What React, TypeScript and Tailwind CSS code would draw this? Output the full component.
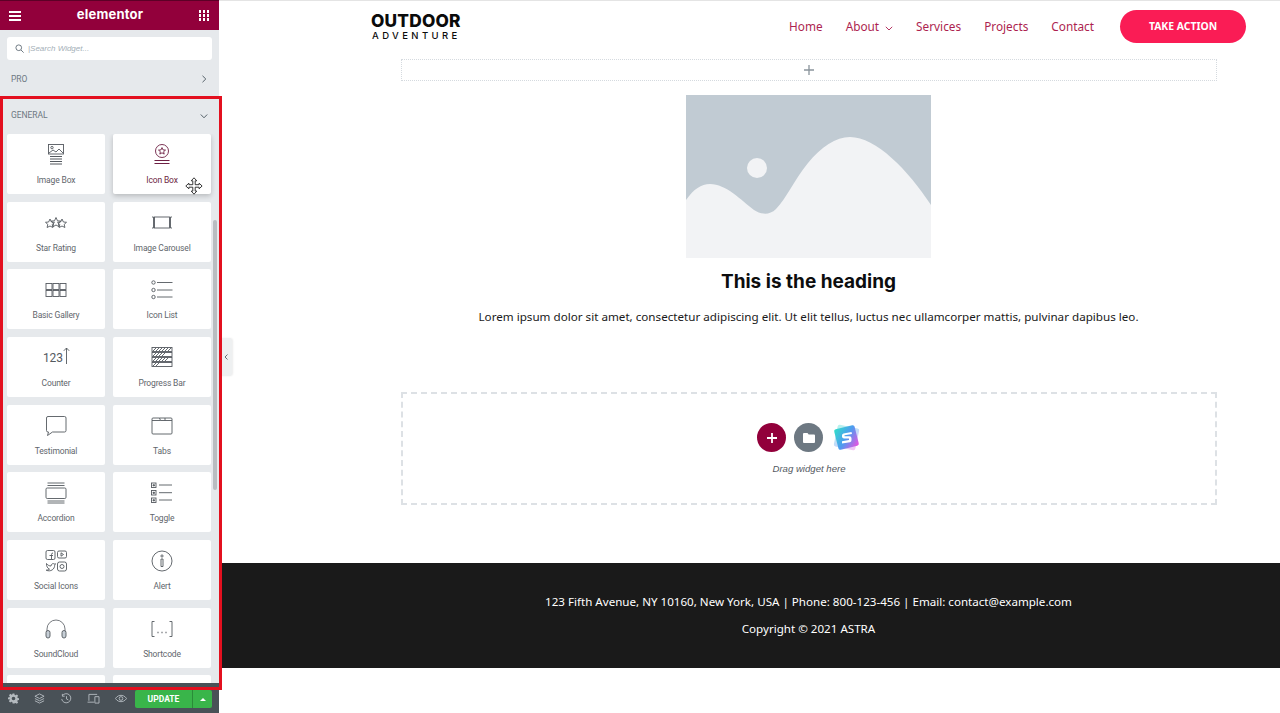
import type { ReactNode } from 'react';

const ink = '#54595f';

function Ico({ children, c = ink }: { children: ReactNode; c?: string }) {
  return (
    <svg width="24" height="24" viewBox="0 0 24 24" fill="none" stroke={c} strokeWidth="0.9" className="block">
      {children}
    </svg>
  );
}

const WIDGETS: { name: string; icon: ReactNode; active?: boolean }[] = [
  { name: 'Image Box', icon: <Ico><rect x="4.500" y="1.500" width="15" height="9.500" /><circle cx="8" cy="4.600" r="1.200" /><path d="M5 10l4-3 3 2 3-3 4 4" /><path d="M6 13.500h12M6 16h12M6 18.500h12M6 21h12" strokeWidth="1.100" /></Ico> },
  { name: 'Icon Box', active: true, icon: <Ico c="#6d1f43"><circle cx="12" cy="8" r="6.500" /><path d="M12 4.600l1 2.300 2.500.2-1.900 1.600.6 2.400-2.200-1.300-2.200 1.300.6-2.400-1.900-1.600 2.500-.2z" /><path d="M4.500 17.500h15M4.500 20.500h15" strokeWidth="1.100" /></Ico> },
  { name: 'Star Rating', icon: <Ico><path d="M6 8l1.400 3 3.100.3-2.300 2.100.7 3.100L6 15l-2.900 1.500.7-3.100L1.500 11.300l3.100-.3z" /><path d="M12 6.500l1.500 3.300 3.300.3-2.500 2.300.7 3.300L12 14l-3 1.700.7-3.300-2.500-2.300 3.300-.3z" /><path d="M18 8l1.400 3 3.100.3-2.300 2.100.7 3.100L18 15l-2.900 1.500.7-3.100-2.300-2.100 3.100-.3z" /></Ico> },
  { name: 'Image Carousel', icon: <Ico><rect x="4.500" y="6" width="15" height="11" /><path d="M2 6h1.500v11H2M22 6h-1.500v11H22" /></Ico> },
  { name: 'Basic Gallery', icon: <Ico><rect x="2" y="5.500" width="6" height="6" /><rect x="9" y="5.500" width="6" height="6" /><rect x="16" y="5.500" width="6" height="6" /><rect x="2" y="12.500" width="6" height="6" /><rect x="9" y="12.500" width="6" height="6" /><rect x="16" y="12.500" width="6" height="6" /></Ico> },
  { name: 'Icon List', icon: <Ico><circle cx="3.500" cy="4.500" r="1.700" /><circle cx="3.500" cy="12" r="1.700" /><circle cx="3.500" cy="19" r="1.700" /><path d="M7 4.500h15.500M7 12h15.500M7 19h15.500" /></Ico> },
  { name: 'Counter', icon: <span className="flex items-center text-[12px] leading-none text-[#54595f] font-['Roboto',sans-serif] ml-[1px]">123<svg width="7" height="18" viewBox="0 0 7 18" fill="none" stroke={ink} strokeWidth="0.9" className="mb-[3px]"><path d="M3.500 17V1M.8 3.800L3.500 1l2.700 2.800" /></svg></span> },
  { name: 'Progress Bar', icon: <Ico><g stroke="#54595f"><rect x="2" y="1.500" width="20" height="4" /><rect x="2" y="6.500" width="20" height="4" /><rect x="2" y="11.500" width="20" height="4" /><rect x="2" y="16.500" width="20" height="4" /></g><path d="M3 5l3-3M6 5l3-3M9 5l3-3M12 5l3-3M15 5l3-3M18 5l3-3M3 10l3-3M6 10l3-3M9 10l3-3M12 10l3-3M3 15l3-3M6 15l3-3M9 15l3-3M12 15l3-3M15 15l3-3M3 20l3-3M6 20l3-3" /></Ico> },
  { name: 'Testimonial', icon: <Ico><path d="M4 2.500h16.500a1.500 1.500 0 0 1 1.500 1.500v12.500a1.500 1.500 0 0 1-1.500 1.500H8.500L3.500 21.500l1-3.500H4a1.500 1.500 0 0 1-1.500-1.500V4A1.500 1.500 0 0 1 4 2.500z" /></Ico> },
  { name: 'Tabs', icon: <Ico><path d="M2 6.500V19a1 1 0 0 0 1 1h18a1 1 0 0 0 1-1V5a1 1 0 0 0-1-1H9.500l1 2.500H2z" /><path d="M2 6.500V5a1 1 0 0 1 1-1h6.500M15 4v2.500M10.500 6.500H22" /></Ico> },
  { name: 'Accordion', icon: <Ico><path d="M3.500 2h17M3.500 4.500h17M3.500 20h17M3.500 22h17" /><rect x="2" y="7" width="20" height="10.500" rx="1.200" /></Ico> },
  { name: 'Toggle', icon: <Ico><rect x="1.500" y="2" width="4.500" height="4.500" /><rect x="1.500" y="9.500" width="4.500" height="4.500" /><rect x="1.500" y="17" width="4.500" height="4.500" /><path d="M3 3.800h1.500v1H3zM3 11.300h1.500v1H3zM3 18.800h1.500v1H3z" fill={ink} /><path d="M9 4h13M9 11.700h13M9 19h13" /></Ico> },
  { name: 'Social Icons', icon: <Ico><rect x="2" y="1.500" width="9" height="9" rx="1.500" /><path d="M7.500 10V5.500a1.500 1.500 0 0 1 1.500-1.500M5.500 6.500h3.500" /><rect x="13.500" y="2" width="9" height="7" rx="1.500" /><path d="M17 3.800l2.500 1.700L17 7.200z" /><path d="M2.500 14.500c1.500 2 3 2.500 4.500 2.500 0-2 2-3 3.500-2l1-.3-.8 1.500c0 4-4 7-8.500 5 1.500 0 2.500-.3 3.300-1-2-1-3.200-3-3-5.700z" /><rect x="13.500" y="13" width="9" height="9" rx="2" /><circle cx="18" cy="17.500" r="2" /></Ico> },
  { name: 'Alert', icon: <Ico><circle cx="12" cy="12" r="10" /><path d="M11 10h2v7.500h-2z" /><circle cx="12" cy="7" r="1.100" /></Ico> },
  { name: 'SoundCloud', icon: <Ico><path d="M3 15v-3a9 9 0 0 1 18 0v3" strokeWidth="0.8" /><rect x="2" y="13.500" width="4" height="7.500" rx="2" fill="#c6ced6" /><rect x="18" y="13.500" width="4" height="7.500" rx="2" fill="#c6ced6" /></Ico> },
  { name: 'Shortcode', icon: <Ico><path d="M4.500 4.500H2v15h2.500M19.500 4.500H22v15h-2.500" /><path d="M7.500 15.500h1M11.500 15.500h1M15.500 15.500h1" strokeWidth="1.600" /></Ico> },
  { name: '', icon: null },
  { name: '', icon: null },
];

function Gear() {
  return (
    <svg width="11" height="11" viewBox="0 0 24 24" fill="#b4babf">
      <path fillRule="evenodd" d="M10 1h4l.6 3.200 2 .8 2.700-1.800 2.800 2.800-1.800 2.700.8 2 3.200.6v4l-3.200.6-.8 2 1.800 2.700-2.800 2.800-2.700-1.800-2 .8L14 23h-4l-.6-3.200-2-.8-2.700 1.800-2.800-2.800 1.800-2.700-.8-2L0 14v-4l3.200-.6.800-2-1.800-2.700L5 1.900l2.700 1.800 2-.8zM12 8a4 4 0 1 0 0 8 4 4 0 0 0 0-8z" />
    </svg>
  );
}

function BottomBar() {
  const s = { fill: 'none', stroke: '#b4babf', strokeWidth: 2 };
  return (
    <div className="h-[30px] shrink-0 bg-[#495157] flex items-center relative z-0">
      <div className="w-[135px] flex justify-between items-center px-[8px]">
        <Gear />
        <svg width="11" height="11" viewBox="0 0 24 24" {...s}><path d="M12 2l10 5-10 5L2 7zM2 12l10 5 10-5M2 17l10 5 10-5" /></svg>
        <svg width="11" height="11" viewBox="0 0 24 24" {...s}><path d="M3 6a10 10 0 1 1-1.500 7M3 2v5h5M12 7v6l4 2" /></svg>
        <svg width="13" height="11" viewBox="0 0 28 24" {...s}><path d="M4 17V3h18M1 20h14M17 8h9v14h-9z" /></svg>
        <svg width="12" height="11" viewBox="0 0 26 24" {...s}><path d="M1 12s4-7 12-7 12 7 12 7-4 7-12 7-12-7-12-7z" /><circle cx="13" cy="12" r="4" /></svg>
      </div>
      <div className="flex h-[18px] w-[77px] mt-[2px] rounded-[2px] overflow-hidden bg-[#39b54a] text-white">
        <div className="w-[58px] flex items-center justify-center text-[8.500px] font-bold font-['Roboto',sans-serif] border-r border-[#2a8c38]">UPDATE</div>
        <div className="flex-1 flex items-center justify-center">
          <div className="w-0 h-0 border-l-[3px] border-r-[3px] border-b-[3px] border-l-transparent border-r-transparent border-b-white" />
        </div>
      </div>
    </div>
  );
}

function Sidebar() {
  return (
    <aside className="w-[219px] h-[713px] shrink-0 bg-[#e6e9ec] flex flex-col overflow-hidden font-['Roboto',sans-serif]">
      <div className="h-[30px] shrink-0 bg-[#92003b] border-t border-[#5c0026] flex items-center justify-between pl-[9px] pr-[10px] text-white">
        <div className="flex flex-col gap-[2px] w-[12px]">
          <span className="h-[2px] bg-white" /><span className="h-[2px] bg-white" /><span className="h-[2px] bg-white" />
        </div>
        <span className="text-[13px] font-bold tracking-[0.2px] font-['Inter',sans-serif] mb-[1px]">elementor</span>
        <div className="grid grid-cols-3 gap-[1.500px] w-[10px]">
          {Array.from({ length: 9 }).map((_, i) => <span key={i} className="w-[2.500px] h-[2.500px] bg-white" />)}
        </div>
      </div>
      <div className="px-[7px] pt-[7px]">
        <div className="h-[23px] bg-white rounded-[3px] flex items-center pl-[8px] gap-[4px]">
          <svg width="9" height="9" viewBox="0 0 12 12" fill="none" stroke="#6d7882" strokeWidth="1.300"><circle cx="5" cy="5" r="3.800" /><path d="M8 8l3.500 3.500" /></svg>
          <span className="text-[8px] italic text-[#a4afb7] font-['Liberation_Sans',sans-serif]">|Search Widget...</span>
        </div>
      </div>
      <div className="h-[36px] shrink-0 flex items-center justify-between pl-[11px] pr-[12px] pt-[2px] text-[8.500px] tracking-[-0.05px] text-[#6d7882]">
        <span>PRO</span>
        <svg width="6" height="8" viewBox="0 0 6 8" fill="none" stroke="#556068" strokeWidth="1"><path d="M1.500 .8L4.800 4 1.500 7.200" /></svg>
      </div>
      <div className="h-[38px] shrink-0 flex items-center justify-between px-[11px] pt-[1px] text-[8.500px] tracking-[-0.05px] text-[#6d7882]">
        <span>GENERAL</span>
        <svg width="8" height="6" viewBox="0 0 8 6" fill="none" stroke="#556068" strokeWidth="1"><path d="M.8 1.500L4 4.800l3.200-3.300" /></svg>
      </div>
      <div className="relative flex-1 min-h-0 overflow-hidden">
        <div className="grid grid-cols-[98px_98px] gap-x-[8px] gap-y-[7.670px] pl-[7px]">
          {WIDGETS.map((w, i) => (
            <div key={i} className={`h-[60px] bg-white rounded-[2px] flex flex-col items-center pt-[9px] ${w.active ? 'shadow-[0_2px_5px_rgba(0,0,0,0.2)]' : ''}`}>
              <div className="h-[24px] flex items-center justify-center">{w.icon}</div>
              {w.name && <span className={`mt-[7px] text-[8.500px] tracking-[-0.15px] leading-[12px] ${w.active ? 'text-[#6d1f43]' : 'text-[#5f666c]'}`}>{w.name}</span>}
            </div>
          ))}
        </div>
        <div className="absolute right-[2px] top-[86px] w-[4px] h-[270px] bg-[#b9bdc1] rounded-[2px]" />
      </div>
      <BottomBar />
    </aside>
  );
}

function Header() {
  const items = ['Home', 'About', 'Services', 'Projects', 'Contact'];
  return (
    <header className="h-[58px] flex items-start justify-between">
      <div className="flex flex-col items-start text-[#0b0b0b] font-['Inter',sans-serif] mt-[12px]">
        <span className="text-[17.300px] leading-[16px] font-extrabold tracking-[0.2px]">OUTDOOR</span>
        <span className="text-[9.500px] leading-[13px] font-medium tracking-[3.400px] ml-[1px]">ADVENTURE</span>
      </div>
      <nav className="flex items-center gap-[23px] mt-[9px] text-[11.800px] text-[#ad1f50] font-['Noto_Sans',sans-serif]">
        {items.map(t => (
          <span key={t} className="flex items-center gap-[6px]">
            {t}
            {t === 'About' && <svg width="8" height="5" viewBox="0 0 8 5" fill="none" stroke="#ad1f50" strokeWidth="0.9" className="mt-[3px]"><path d="M.8.8L4 4l3.200-3.200" /></svg>}
          </span>
        ))}
        <span className="ml-[3px] w-[126px] h-[33px] rounded-full bg-[#fa1c55] text-white text-[10.400px] font-bold flex items-center justify-center">TAKE ACTION</span>
      </nav>
    </header>
  );
}

function Placeholder() {
  return (
    <svg width="245" height="163" viewBox="0 0 245 163" className="block">
      <rect width="245" height="163" fill="#c1cbd3" />
      <circle cx="71" cy="73" r="10" fill="#f2f3f5" />
      <path d="M0 105C8 94 15 89 24 89C40 89 55 105 68 115C74 119 83 121 90 114C100 104 108 85 122 68C135 52 150 42 164 42C190 42 222 75 245 110V163H0Z" fill="#f2f3f5" />
    </svg>
  );
}

function DropZone() {
  return (
    <div className="h-[113px] mt-[65px] border-2 border-dashed border-[#dde1e5] flex flex-col items-center pt-[29px]">
      <div className="flex items-center gap-[8px]">
        <div className="w-[29px] h-[29px] rounded-full bg-[#92003b] flex items-center justify-center">
          <svg width="10" height="10" viewBox="0 0 10 10" stroke="#fff" strokeWidth="1.800"><path d="M5 0v10M0 5h10" /></svg>
        </div>
        <div className="w-[29px] h-[29px] rounded-full bg-[#6d7882] flex items-center justify-center">
          <svg width="12" height="10" viewBox="0 0 12 10" fill="#fff"><path d="M1 0h3.500l1.200 1.500H11a1 1 0 0 1 1 1V9a1 1 0 0 1-1 1H1a1 1 0 0 1-1-1V1a1 1 0 0 1 1-1z" /></svg>
        </div>
        <svg width="29" height="29" viewBox="0 0 29 29" className="ml-[1px]">
          <defs>
            <linearGradient id="sp" x1="0" y1="0" x2="1" y2="1">
              <stop offset="0" stopColor="#2fe0c8" /><stop offset="0.5" stopColor="#4f9bf0" /><stop offset="1" stopColor="#f04fe0" />
            </linearGradient>
          </defs>
          <rect x="3.500" y="3.500" width="22" height="22" rx="2" fill="url(#sp)" opacity="0.35" transform="rotate(12 14.500 14.500)" />
          <rect x="4" y="4" width="21" height="21" rx="2" fill="url(#sp)" transform="rotate(-14 14.500 14.500)" />
          <path d="M19.500 9l-8 1.500a2 2 0 0 0-1.500 2v1.300a2 2 0 0 0 2 1.700h5v1.500l-7 1.300v2.200l8-1.300a2 2 0 0 0 1.500-2v-2a2 2 0 0 0-2-2h-5v-1l7.500-1.300z" fill="#fff" />
        </svg>
      </div>
      <p className="mt-[10px] text-[9.600px] leading-[14px] italic text-[#54595f] font-['Liberation_Sans',sans-serif]">Drag widget here</p>
    </div>
  );
}

export default function App() {
  return (
    <div className="relative flex w-[1280px] h-[713px] overflow-hidden bg-white">
      <Sidebar />
      <main className="flex-1 relative border-t border-[#e4e4e4]">
        <div className="pl-[152px] pr-[34px]">
          <Header />
          <div className="pl-[30px] pr-[29px]">
            <div className="h-[22px] border border-dotted border-[#d5dadf] flex items-center justify-center">
              <svg width="10" height="10" viewBox="0 0 10 10" stroke="#8a949c" strokeWidth="1.300"><path d="M5 0v10M0 5h10" /></svg>
            </div>
            <div className="flex justify-center mt-[14px] pr-[1px]"><Placeholder /></div>
            <h2 className="mt-[12px] pr-[1px] text-center text-[19px] leading-[24px] font-bold text-[#0c0d0e] font-['Inter',sans-serif]">This is the heading</h2>
            <p className="mt-[13px] pr-[1px] text-center text-[11.650px] leading-[20px] text-[#1a1a1a] font-['Noto_Sans',sans-serif]">Lorem ipsum dolor sit amet, consectetur adipiscing elit. Ut elit tellus, luctus nec ullamcorper mattis, pulvinar dapibus leo.</p>
            <DropZone />
          </div>
        </div>
        <footer className="mt-[58px] h-[105px] bg-[#1a1a1a] text-white text-[11.600px] font-['Noto_Sans',sans-serif] pl-[152px] pr-[34px] pt-[29px] text-center">
          <p className="leading-[20px]">123 Fifth Avenue, NY 10160, New York, USA | Phone: 800-123-456 | Email: contact@example.com</p>
          <p className="mt-[7px] leading-[20px]">Copyright © 2021 ASTRA</p>
        </footer>
        <div className="absolute left-0 top-[337px] w-[13px] h-[38px] bg-[#eef0f1] rounded-r-[3px] flex items-center justify-center shadow-[1px_0_2px_rgba(0,0,0,0.08)]">
          <svg width="4" height="6" viewBox="0 0 4 6" fill="none" stroke="#556068" strokeWidth="0.9"><path d="M3.500.5L1 3l2.500 2.500" /></svg>
        </div>
      </main>
      <div className="absolute left-0 top-[96px] w-[222px] h-[594px] border-[3px] border-[#e3101f] pointer-events-none" />
      <svg width="18" height="18" viewBox="0 0 18 18" className="absolute left-[185px] top-[177px]" fill="#fff" stroke="#222" strokeWidth="0.9">
        <path d="M9 .8l2.800 3H10.200v3.900h3.900V6.200l3 2.800-3 2.800v-1.600h-3.900v3.900h1.600L9 17.200l-2.800-3.100h1.600v-3.900H3.900v1.600L.8 9l3.100-2.800v1.500h3.900V3.800H6.200z" />
      </svg>
    </div>
  );
}
